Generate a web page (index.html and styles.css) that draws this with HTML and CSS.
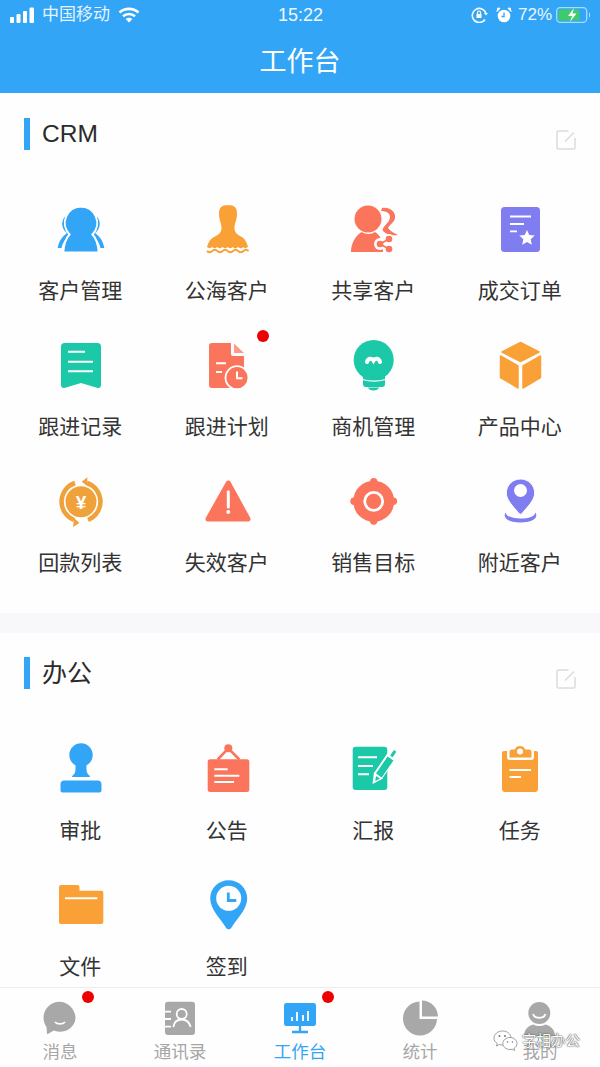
FILE: index.html
```html
<!DOCTYPE html>
<html lang="zh-CN">
<head>
<meta charset="utf-8">
<title>工作台</title>
<link rel="stylesheet" href="styles.css">
</head>
<body>
<div class="page">
  <header class="header">
    <div class="status">
      <div class="status-side">
        <svg class="signal" width="25" height="16" viewBox="0 0 25 16"><rect x="1" y="10" width="4" height="6" rx="1"/><rect x="7.5" y="7" width="4" height="9" rx="1"/><rect x="14" y="4" width="4" height="12" rx="1"/><rect x="20.5" y="0.5" width="4.5" height="15.5" rx="1"/></svg>
        <span class="carrier">中国移动</span>
        <svg class="wifi" width="22" height="16" viewBox="0 0 22 16" fill="none" stroke="#fff" stroke-width="2.6"><path d="M1.5 5.5C7 .7 15 .7 20.5 5.5"/><path d="M5 9.3c3.500-3 8.500-3 12 0"/><path d="M11 15.500l3.400-3.600c-2-1.500-4.800-1.500-6.800 0z" fill="#fff" stroke="none"/></svg>
      </div>
      <span class="time">15:22</span>
      <div class="status-side status-right">
        <svg class="st-lock" width="17" height="16" viewBox="0 0 17 16" fill="none" stroke="#fff" stroke-width="1.600"><path d="M14 12.500A7 7 0 1 1 15 6.500"/><path d="M13 6h4l-2 2.500z" fill="#fff" stroke="none"/><rect x="5.500" y="7" width="5" height="4" fill="#fff" stroke="none"/><path d="M6.500 7V5.500a1.500 1.500 0 0 1 3 0V7" stroke-width="1.200"/></svg>
        <svg class="st-alarm" width="16" height="16" viewBox="0 0 16 16"><circle cx="8" cy="9" r="6.300" fill="#fff"/><path d="M1 4.500 4 1.300 1.800 1zM15 4.500 12 1.300 14.200 1z" fill="#fff" stroke="#fff"/><path d="M8 5.500V9.500H5.500" fill="none" stroke="#33a5f7" stroke-width="1.300"/></svg>
        <span class="pct">72%</span>
        <svg class="battery" width="36" height="16" viewBox="0 0 36 16"><rect x="0.700" y="0.700" width="30" height="14.600" rx="3.500" fill="none" stroke="#a9dcfb" stroke-width="1.300"/><rect x="2.500" y="2.500" width="21" height="11" rx="1.500" fill="#3ecb6c"/><path d="M18 1 12 9h4l-2 6 6.500-8.500h-4z" fill="#fff"/><path d="M33 5.500c1.500.3 1.500 4.700 0 5z" fill="#a9dcfb"/></svg>
      </div>
    </div>
    <h1 class="title">工作台</h1>
  </header>

  <main class="main">
    <section class="section section-crm">
      <div class="sec-head">
        <h2 class="sec-title sec-title-latin">CRM</h2>
        <svg class="edit" width="20" height="20" viewBox="0 0 20 20" fill="none"><path d="M12.500 1H2.500A1.500 1.500 0 0 0 1 2.500v15A1.500 1.500 0 0 0 2.500 19h15a1.500 1.500 0 0 0 1.500-1.500V8M18 2.500 9 11.500"/></svg>
      </div>
      <div class="grid">
        <div class="item">
          <svg class="icon" viewBox="0 0 52 52"><g class="f-blue"><path d="M14 11C7 15 6 25 13 30 9 33 5 37 3.700 45h3.800C9 38 13 34 19 31 11 27 9 19 14 11z"/><path d="M40 11c7 4 8 14 1 19 4 3 8 7 9.300 15h-3.800C45 38 41 34 35 31c8-4 10-12 5-20z"/><path stroke="#fff" stroke-width="2" d="M27 3.500A16.500 16.500 0 0 0 15.500 31.500C12 35 9.800 41 9.300 49.500h35.400C44.200 41 42 35 38.500 31.500A16.500 16.500 0 0 0 27 3.500z"/></g></svg>
          <span class="label">客户管理</span>
        </div>
        <div class="item">
          <svg class="icon" viewBox="0 0 52 52"><path class="f-orange" d="M27.500 2C20 2 18 5 18 11c0 6 2.500 9 2.500 14 0 5-3.500 7-7.500 9-4 2-6 6-7 10 2.500 1.500 3.500 1.500 5 0 2.500 1.800 3.500 1.800 5 0 2.500 1.800 3.500 1.800 5.500 0 2.500 1.800 3.500 1.800 5 0 2.500 1.800 3.500 1.800 5 0 2.500 1.800 3.500 1.800 5.500 0 2.500 1.800 3.500 1.800 5 0 1.500 1.500 2.500 1.500 5 0-1-4-3-8-6-10-4-2-7.500-4-7.500-9 0-5 2.500-8 2.500-14 0-6-2-9-9.500-9z"/><path class="s-orange" d="M6 48q2.600 2.500 5.200 0t5.200 0 5.200 0 5.200 0 5.200 0 5.200 0 5.200 0 5.200 0" fill="none" stroke-width="1.800"/></svg>
          <span class="label">公海客户</span>
        </div>
        <div class="item">
          <svg class="icon" viewBox="0 0 52 52"><g class="f-coral"><circle cx="21" cy="16" r="13.500"/><path d="M4 49c0-8 4-16 10.500-20 4 2.500 10 2.500 13.500 0 5 2.500 8 9 8 20z"/><path d="M35 5c8-1 14 4 13 10-1 5-6 7-7 10 2 3 6 5 10 7-6 1-11 0-15-4-2-4 7-8 7-14 0-4-4-6-9-6z"/></g><circle cx="42" cy="36" r="5" fill="#fff"/><circle cx="33" cy="41" r="6" fill="#fff"/><circle cx="42" cy="46" r="5" fill="#fff"/><path d="M42 36 33 41l9 5" fill="none" stroke="#fff" stroke-width="5"/><path class="s-coral" d="M42 36 33 41l9 5" fill="none" stroke-width="1.800"/><g class="f-coral"><circle cx="42" cy="36" r="3.300"/><circle cx="33" cy="41" r="3.300"/><circle cx="42" cy="46" r="3.300"/></g></svg>
          <span class="label">共享客户</span>
        </div>
        <div class="item">
          <svg class="icon" viewBox="0 0 52 52"><rect class="f-purple" x="7" y="4" width="39" height="45" rx="3.500"/><path d="M16 13.500h21M16 21h14M16 28.300h7" stroke="#fff" stroke-width="1.800" fill="none"/><path fill="#fff" d="m33 27 2.300 5 5.400.600-4 3.700 1.100 5.400-4.800-2.700-4.800 2.700 1.100-5.400-4-3.700 5.400-.600z"/></svg>
          <span class="label">成交订单</span>
        </div>
        <div class="item">
          <svg class="icon" viewBox="0 0 52 52"><path class="f-teal" d="M10.500 4h33A3.500 3.500 0 0 1 47 7.500V46c0 2.500-2 3.500-4 2.700l-16-4.700-16 4.700c-2 .800-4-.200-4-2.700V7.500A3.500 3.500 0 0 1 10.500 4z"/><path d="M14 12.700h17M14 22.700h25M14 32.300h25" stroke="#fff" stroke-width="2" fill="none"/></svg>
          <span class="label">跟进记录</span>
        </div>
        <div class="item">
          <svg class="icon" viewBox="0 0 52 52"><path class="f-coral" d="M11 4h19v11a2 2 0 0 0 2 2h11v30a2 2 0 0 1-2 2H11a3 3 0 0 1-3-3V7a3 3 0 0 1 3-3z"/><path class="f-coral-l" d="M33 4.500 43 14H33z"/><path d="M15 24.300h10M15 33h6" stroke="#fff" stroke-width="2" fill="none"/><circle class="f-coral" cx="36" cy="38.700" r="11.500" stroke="#fff" stroke-width="1.800"/><path d="M36 32.500v6.700h5.500" stroke="#fff" stroke-width="2" fill="none"/></svg>
          <span class="label">跟进计划</span>
          <i class="dot dot-item"></i>
        </div>
        <div class="item">
          <svg class="icon" viewBox="0 0 52 52"><g class="f-teal"><circle cx="26.700" cy="21" r="20"/><path d="M16 37h22v8a3 3 0 0 1-3 3H19a3 3 0 0 1-3-3z"/><path d="M21 48.500h11c-.500 2-3 3-5.500 3S21.500 50.500 21 48.500z"/></g><path d="M15.500 40.500c7.500 2.200 15.500 2.200 23 0" stroke="#fff" stroke-width="1.200" fill="none"/><path d="M20 23c1-4 5-4 6.500-1.500C28 19 32 19 33 23" stroke="#fff" stroke-width="4" fill="none" stroke-linecap="round"/></svg>
          <span class="label">商机管理</span>
        </div>
        <div class="item">
          <svg class="icon" viewBox="0 0 52 52"><g class="f-orange s-orange" stroke-width="1.500" stroke-linejoin="round"><path d="M26.500 3.500 45 13 26.500 22.500 8 13z"/><path d="M6.500 17 24 26.800V49L6.500 38.500z"/><path d="M46.500 17 29 26.800V49l17.500-10.500z"/></g></svg>
          <span class="label">产品中心</span>
        </div>
        <div class="item">
          <svg class="icon" viewBox="0 0 52 52"><circle class="f-amber" cx="27" cy="26.700" r="15.500"/><g class="s-amber" fill="none" stroke-width="4.500"><path d="M20 45A19.700 19.700 0 0 1 21 8"/><path d="M33 8A19.700 19.700 0 0 1 34 45"/></g><path class="f-amber" d="M27.700 6.700 33.300 2.300V11zM25.500 48 20 43l-1 9z"/><text class="yen" x="27" y="33.500" text-anchor="middle">¥</text></svg>
          <span class="label">回款列表</span>
        </div>
        <div class="item">
          <svg class="icon" viewBox="0 0 52 52"><path class="f-coral s-coral" stroke-width="5" stroke-linejoin="round" d="M27.300 8 47 44H7z"/><path d="M27.300 16.700V32" stroke="#fff" stroke-width="3" stroke-linecap="round" fill="none"/><circle cx="27.300" cy="37" r="2" fill="#fff"/></svg>
          <span class="label">失效客户</span>
        </div>
        <div class="item">
          <svg class="icon" viewBox="0 0 52 52"><g class="f-coral"><circle cx="26.700" cy="26.300" r="20.500"/><circle cx="26.700" cy="6.700" r="3.700"/><circle cx="26.700" cy="46" r="3.700"/><circle cx="7" cy="26.300" r="3.700"/><circle cx="46.400" cy="26.300" r="3.700"/></g><circle cx="26.700" cy="26.300" r="9" fill="none" stroke="#fff" stroke-width="2.800"/></svg>
          <span class="label">销售目标</span>
        </div>
        <div class="item">
          <svg class="icon" viewBox="0 0 52 52"><path class="f-purple" d="M12 37.500C9 40 10 47.500 26.500 47.500S44 40 41 37.500C41.500 41 35 43.500 26.500 43.500S11.500 41 12 37.500z"/><path class="f-purple" d="M26.500 4C18.800 4 12.300 10 12.300 18c0 7.500 8 14.500 12.600 20.400.800 1 2.400 1 3.200 0C32.700 32.500 40.700 25.500 40.700 18 40.700 10 34.200 4 26.500 4z" stroke="#fff" stroke-width="1"/><circle cx="26.500" cy="15.500" r="6.500" fill="#fff"/></svg>
          <span class="label">附近客户</span>
        </div>
      </div>
    </section>

    <section class="section">
      <div class="sec-head">
        <h2 class="sec-title">办公</h2>
        <svg class="edit" width="20" height="20" viewBox="0 0 20 20" fill="none"><path d="M12.500 1H2.500A1.500 1.500 0 0 0 1 2.500v15A1.500 1.500 0 0 0 2.500 19h15a1.500 1.500 0 0 0 1.500-1.500V8M18 2.500 9 11.500"/></svg>
      </div>
      <div class="grid">
        <div class="item">
          <svg class="icon" viewBox="0 0 52 52"><g class="f-blue"><circle cx="27" cy="12" r="11.700"/><path d="M21.500 20h11c0 4-.500 8 1 10.500 1 1.500 2.500 2 2.500 3.500H18c0-1.500 1.500-2 2.500-3.500 1.500-2.500 1-6.500 1-10.500z"/><path d="M10.500 37.500h33a4 4 0 0 1 4 4v6a2 2 0 0 1-2 2h-37a2 2 0 0 1-2-2v-6a4 4 0 0 1 4-4z"/></g></svg>
          <span class="label">审批</span>
        </div>
        <div class="item">
          <svg class="icon" viewBox="0 0 52 52"><rect class="f-coral" x="6.700" y="16.300" width="41.600" height="32.700" rx="2.500"/><path class="s-coral" d="M16.700 16.500 27.300 5.300 38.300 16.500" stroke-width="2.600" fill="none"/><circle class="f-coral" cx="27.300" cy="5.300" r="4"/><path d="M13.300 26.300h13.400M13.300 32.700h25M13.300 39H33" stroke="#fff" stroke-width="2" fill="none"/></svg>
          <span class="label">公告</span>
        </div>
        <div class="item">
          <svg class="icon" viewBox="0 0 52 52"><rect class="f-teal" x="5.700" y="3.700" width="34.600" height="43.300" rx="3"/><path d="M11 14.300h19M11 23h15M11 31.300h11" stroke="#fff" stroke-width="2" fill="none"/><path d="M47 9.500 31 33" stroke="#fff" stroke-width="10" fill="none"/><path class="s-teal" d="M43.500 15.500 31.500 33" stroke-width="7" fill="none"/><path class="s-teal" d="M45 9.800 47.500 11.500" stroke-width="6.500" fill="none" transform="rotate(0)"/><path d="M27 29 25.500 41 36 35.500z" fill="#fff"/><path class="f-teal" d="M29 33 28.200 38.200 33 35.500z"/></svg>
          <span class="label">汇报</span>
        </div>
        <div class="item">
          <svg class="icon" viewBox="0 0 52 52"><path class="f-orange" d="M10 8h3v6a3 3 0 0 0 3 3h21a3 3 0 0 0 3-3V8h2a2 2 0 0 1 2 2v36a3 3 0 0 1-3 3H11a3 3 0 0 1-3-3V10a2 2 0 0 1 2-2z"/><path class="f-orange" d="M15.500 14.500V9c0-1.500 1-2.500 2.500-2.500h3C21.500 4 23.500 3 26 3s4.500 1 5 3.500h4c1.500 0 2.500 1 2.500 2.500v5.500z"/><circle cx="26" cy="8.500" r="3" fill="#fff"/><path d="M15.500 27H37M15.500 34H27" stroke="#fff" stroke-width="2" fill="none"/></svg>
          <span class="label">任务</span>
        </div>
        <div class="item">
          <svg class="icon" viewBox="0 0 52 52"><path class="f-orange" d="M7 6h16.500a2 2 0 0 1 2 2v3.700H47.300a2 2 0 0 1 2 2V43a2 2 0 0 1-2 2H7a2 2 0 0 1-2-2V8a2 2 0 0 1 2-2z"/><path d="M11 19.300h32.300" stroke="#fff" stroke-width="2" fill="none"/></svg>
          <span class="label">文件</span>
        </div>
        <div class="item">
          <svg class="icon" viewBox="0 0 52 52"><path class="f-blue" d="M27.700 1.300C17.500 1.300 9.200 9.300 9.200 19.500c0 11 11 21 16 29.500 1.100 1.700 3.900 1.700 5 0 5-8.500 16-18.500 16-29.500 0-10.200-8.300-18.200-18.500-18.200z"/><circle cx="27.700" cy="19.300" r="12.500" fill="#fff"/><path class="s-blue" d="M27.300 13.500v8h8" stroke-width="2.800" fill="none"/></svg>
          <span class="label">签到</span>
        </div>
      </div>
    </section>
  </main>

  <nav class="tabbar">
    <div class="tab">
      <svg class="tab-icon" viewBox="0 0 36 36"><path class="f-grey" d="M17.500 1.700c-8.800 0-16 7-16 16 0 3.500 1.200 6.800 3 9.300L5 33.500c0 .500.400.800.800.500l6-3.500c1.700.700 3.600 1.200 5.700 1.200 8.800 0 16-6.200 16-14S26.300 1.700 17.500 1.700z"/><path d="M13 22c2 2.500 8 2.500 10 0" stroke="#fff" stroke-width="1.600" fill="none"/></svg>
      <span class="tab-label">消息</span>
      <i class="dot dot-tab"></i>
    </div>
    <div class="tab">
      <svg class="tab-icon" viewBox="0 0 36 36"><rect class="f-grey" x="3" y="1.700" width="30" height="33.300" rx="3"/><path d="M3 11.700h6M3 19h6M3 26.700h6" stroke="#fff" stroke-width="1.800" fill="none"/><circle cx="19.700" cy="14" r="5" fill="none" stroke="#fff" stroke-width="1.800"/><path d="M11.300 27c.800-5 4-7.500 8.400-7.500S27.300 22 28.700 27" fill="none" stroke="#fff" stroke-width="1.800"/></svg>
      <span class="tab-label">通讯录</span>
    </div>
    <div class="tab tab-active">
      <svg class="tab-icon" viewBox="0 0 36 36"><rect class="f-blue" x="2" y="3" width="32" height="23" rx="2.500"/><path class="s-blue" d="M18 26v5M10 32h16" stroke-width="2.400" fill="none"/><path d="M10 21v-4M15 21v-9M21 21v-6M26 21v-10" stroke="#fff" stroke-width="1.800" fill="none"/></svg>
      <span class="tab-label">工作台</span>
      <i class="dot dot-tab"></i>
    </div>
    <div class="tab">
      <svg class="tab-icon" viewBox="0 0 36 36"><path class="f-grey" d="M20 .500A16.500 16.500 0 0 1 36 16.500H20z"/><path class="f-grey" d="M17.500 1.500A17 17 0 1 0 35 19H17.500z"/></svg>
      <span class="tab-label">统计</span>
    </div>
    <div class="tab">
      <svg class="tab-icon" viewBox="0 0 36 36"><circle class="f-grey" cx="17.300" cy="13" r="11"/><path d="M11 14c1.500 5 11 5 12.500 0" fill="none" stroke="#fff" stroke-width="1.800"/><path class="f-grey" d="M2 36c0-6 4-10 9-11.500 4 2 8.500 2 12.500 0C29 26 33 30 33 36z"/></svg>
      <span class="tab-label">我的</span>
    </div>
  </nav>

  <div class="watermark">
    <svg class="wm-icon" width="26" height="22" viewBox="0 0 26 22" fill="#fff" stroke="#777" stroke-width="0.700"><path d="M9.500 1C4.800 1 1 4.200 1 8c0 2.300 1.200 4.200 3.200 5.500L3.500 16l2.800-1.500c1 .300 2 .400 3.200.400C14 15 18 12 18 8s-3.800-7-8.500-7z"/><path d="M17 7.500c-4 0-7.200 2.700-7.200 6s3.200 6 7.200 6c.800 0 1.600-.100 2.300-.300l2.300 1.300-.600-2.100c1.800-1.100 3-2.900 3-4.900 0-3.300-3-6-7-6z"/><circle cx="6.500" cy="6" r="1" fill="#777" stroke="none"/><circle cx="12" cy="6" r="1" fill="#777" stroke="none"/><circle cx="14.500" cy="12" r=".8" fill="#777" stroke="none"/><circle cx="19.500" cy="12" r=".8" fill="#777" stroke="none"/></svg>
    <span class="wm-text">字相办公</span>
  </div>
</div>
</body>
</html>
```

FILE: styles.css
```css
* { box-sizing: border-box; }
html, body { margin: 0; padding: 0; }
body {
  font-family: "Liberation Sans", "Noto Sans CJK SC", sans-serif;
  background: #fff;
  color: #333;
}
.page {
  position: relative;
  width: 600px;
  height: 1067px;
  display: flex;
  flex-direction: column;
  overflow: hidden;
}

/* header */
.header { background: #33a5f7; color: #fff; height: 93px; flex: none; }
.status {
  height: 30px;
  padding: 0 8px 0 9px;
  display: grid;
  grid-template-columns: 1fr auto 1fr;
  align-items: center;
}
.status-side { display: flex; align-items: center; }
.status-right { justify-content: flex-end; }
.signal { fill: #fff; }
.carrier { font-size: 17px; margin-left: 8px; color: #e4f4ff; line-height: 30px; }
.wifi { margin-left: 8px; }
.time { font-size: 18px; color: #f0f9ff; }
.st-lock { margin-right: 8px; }
.st-alarm { margin-right: 6px; }
.pct { font-size: 17px; color: #eaf6ff; margin-right: 4px; }
.title {
  margin: 0;
  height: 63px;
  font-size: 27px;
  font-weight: 400;
  line-height: 65px;
  text-align: center;
}

/* sections */
.main { flex: 1; min-height: 0; overflow: hidden; background: #f8f8fa; }
.section { background: #fefefe; }
.section-crm { padding-bottom: 2px; margin-bottom: 20px; }
.sec-head {
  display: flex;
  justify-content: space-between;
  align-items: flex-start;
  height: 110px;
  padding: 24px 24px 0;
}
.section-crm .sec-head { padding-top: 25px; }
.sec-title {
  margin: 0;
  height: 32px;
  border-left: 6px solid #33a5f7;
  padding-left: 12px;
  font-size: 25px;
  font-weight: 400;
  line-height: 33px;
  color: #2b2b2b;
}
.sec-title-latin { font-size: 24.500px; line-height: 31px; }
.edit { margin-top: 12px; stroke: #dcdcdc; stroke-width: 1.500; }

/* grid */
.grid {
  display: grid;
  grid-template-columns: repeat(4, 1fr);
  grid-auto-rows: 136px;
  padding: 0 7px;
}
.item {
  position: relative;
  display: flex;
  flex-direction: column;
  align-items: center;
}
.icon { width: 52px; height: 52px; overflow: visible; display: block; }
.label {
  margin-top: 21px;
  font-size: 21px;
  line-height: 30px;
  color: #333;
  white-space: nowrap;
}

/* palette */
.f-blue { fill: #33a5f7; }
.f-orange { fill: #f9a136; }
.f-amber { fill: #f0a23a; }
.f-coral { fill: #fb745c; }
.f-coral-l { fill: #fc9a88; }
.f-teal { fill: #1bc8a7; }
.f-purple { fill: #7f7df0; }
.f-grey { fill: #a8a8a8; }
.s-blue { stroke: #33a5f7; }
.s-orange { stroke: #f9a136; }
.s-amber { stroke: #f0a23a; }
.s-coral { stroke: #fb745c; }
.s-teal { stroke: #1bc8a7; }
.yen { fill: #fff; font-size: 19px; font-weight: 700; font-family: "Liberation Sans", sans-serif; }

/* badges */
.dot {
  position: absolute;
  width: 12px;
  height: 12px;
  border-radius: 50%;
  background: #ec0000;
}
.dot-item { top: -9px; right: 31px; }
.dot-tab { top: 3px; left: 82px; }

/* tab bar */
.tabbar {
  flex: none;
  height: 80px;
  display: grid;
  grid-template-columns: repeat(5, 1fr);
  background: #fefefe;
  border-top: 1px solid #eee;
}
.tab {
  position: relative;
  display: flex;
  flex-direction: column;
  align-items: center;
  padding-top: 12px;
}
.tab-icon { width: 36px; height: 36px; display: block; overflow: visible; }
.tab-label {
  margin-top: 4px;
  font-size: 17.500px;
  line-height: 24px;
  color: #a6a6a6;
}
.tab-active .tab-label { color: #33a5f7; }

/* watermark over the bar */
.watermark {
  position: absolute;
  left: 493px;
  top: 1030px;
  display: flex;
  align-items: center;
  gap: 3px;
}
.wm-text {
  font-size: 14.500px;
  line-height: 22px;
  color: #fff;
  text-shadow: 0 0 1px #333, 0 0 2px #555;
}
```
